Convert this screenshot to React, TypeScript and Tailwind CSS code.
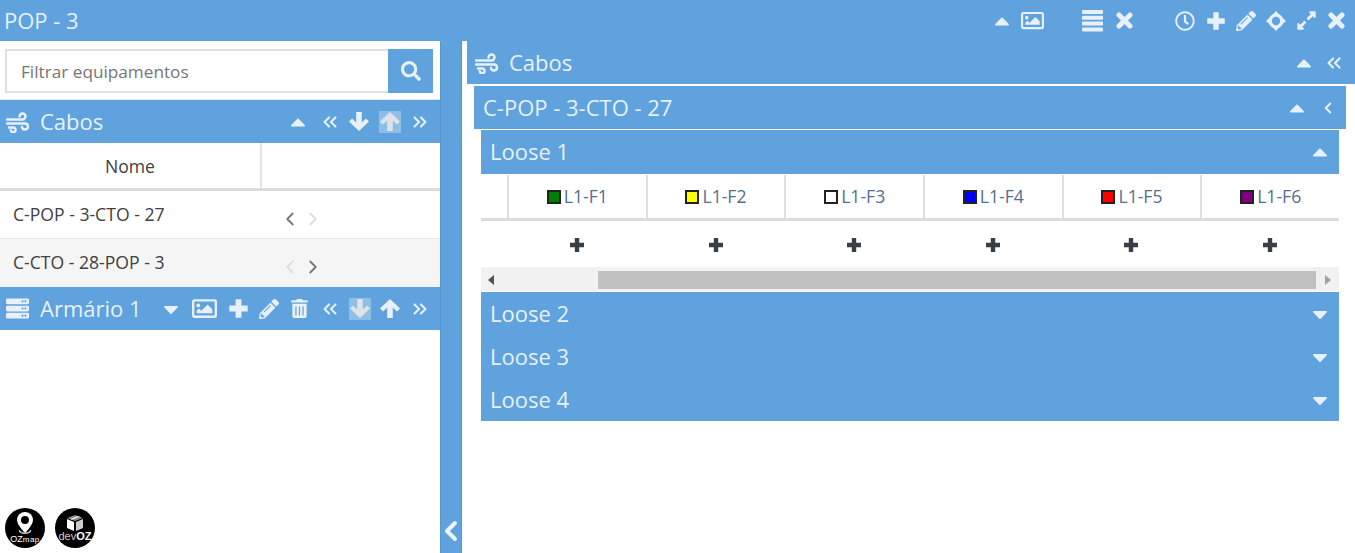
import type { ReactNode } from "react";
import { ChevronLeft, ChevronRight, ChevronsLeft, ChevronsRight } from "lucide-react";
import {
  FaCaretDown,
  FaCaretUp,
  FaExpandAlt,
  FaPencilAlt,
  FaRegClock,
  FaRegImage,
  FaSearch,
  FaServer,
  FaTrashAlt,
} from "react-icons/fa";

function Crosshair() {
  return (
    <svg width="20" height="20" viewBox="0 0 20 20" className="shrink-0">
      <circle cx="10" cy="10" r="5.8" fill="none" stroke="currentColor" strokeWidth="3.2" />
      <path d="M10 0l3.5 4h-7zM10 20l3.5-4h-7zM0 10l4-3.5v7zM20 10l-4-3.5v7z" fill="currentColor" />
    </svg>
  );
}

function Plus({ size, className }: { size: number; className?: string }) {
  return (
    <svg width={size} height={size} viewBox="0 0 16 16" className={className}>
      <path d="M5.8 1h4.4v4.8H15v4.4h-4.8V15H5.8v-4.8H1V5.800h4.800z" fill="currentColor" />
    </svg>
  );
}

function Cross({ className }: { className?: string }) {
  return (
    <svg width="17" height="17" viewBox="0 0 17 17" className={className}>
      <path d="M3 3l11 11M14 3L3 14" stroke="currentColor" strokeWidth="5" strokeLinecap="round" />
    </svg>
  );
}

function Lines({ className }: { className?: string }) {
  return (
    <svg width="21" height="22" viewBox="0 0 21 22" className={className}>
      <rect y="0" width="21" height="4" rx="1" fill="currentColor" />
      <rect y="5.8" width="21" height="4" rx="1" fill="currentColor" />
      <rect y="11.6" width="21" height="4" rx="1" fill="currentColor" />
      <rect y="17.4" width="21" height="4" rx="1" fill="currentColor" />
    </svg>
  );
}

function Wind({ className }: { className?: string }) {
  return (
    <svg width="24" height="22" viewBox="0 0 24 22" fill="none" className={className}>
      <g stroke="currentColor" strokeWidth="2.4" strokeLinecap="round">
        <path d="M1 8.5h15.5a3 3 0 1 0-3-3" />
        <path d="M1 12.5h18a3 3 0 1 1-3 3.5" />
        <path d="M3 16.5h4.2a2.4 2.4 0 1 1-2.4 2.8" />
      </g>
    </svg>
  );
}

function ArrowUp({ className }: { className?: string }) {
  return (
    <svg width="22" height="21" viewBox="0 0 22 21" className={className}>
      <path d="M11 1l10 9.5-3 3-4.200-4V20H8.200V9.500l-4.200 4-3-3z" fill="currentColor" />
    </svg>
  );
}

function Bar({
  title,
  icon,
  right,
  className,
}: {
  title: string;
  icon?: ReactNode;
  right?: ReactNode;
  className: string;
}) {
  return (
    <div className={`flex items-center bg-[#5fa2dd] text-[#e8f1fa] ${className}`}>
      {icon}
      <span className="text-[22px] leading-none whitespace-nowrap pb-[2px]">{title}</span>
      <div className="ml-auto flex items-center">{right}</div>
    </div>
  );
}

function Dimmed({ children }: { children: ReactNode }) {
  return (
    <span className="w-[22px] h-[22px] flex items-center justify-center bg-white/30 text-[#dfe3e6]">{children}</span>
  );
}

const fibers = [
  { name: "L1-F1", color: "bg-[#008000]" },
  { name: "L1-F2", color: "bg-[#ffff00]" },
  { name: "L1-F3", color: "bg-white" },
  { name: "L1-F4", color: "bg-[#0000ff]" },
  { name: "L1-F5", color: "bg-[#ff0000]" },
  { name: "L1-F6", color: "bg-[#800080]" },
];

export default function App() {
  return (
    <div className="w-[1355px] h-[553px] overflow-hidden bg-white flex flex-col font-['Open_Sans',sans-serif]">
      {/* top bar */}
      <div className="h-[41px] shrink-0 bg-[#5fa2dd] text-[#e8f1fa] flex items-center pl-[4px] pr-[10px]">
        <span className="text-[22px] leading-none pb-[2px]">POP - 3</span>
        <div className="ml-auto flex items-center">
          <FaCaretUp size={24} className="mr-[7px]" />
          <FaRegImage size={23} className="mr-[38px]" />
          <Lines className="mr-[13px]" />
          <Cross className="mr-[42px]" />
          <FaRegClock size={20} className="mr-[11px]" />
          <Plus size={20} className="mr-[10px]" />
          <FaPencilAlt size={20} className="mr-[10px]" />
          <Crosshair />
          <FaExpandAlt size={21} className="ml-[10px] mr-[11px]" />
          <Cross />
        </div>
      </div>

      <div className="flex flex-1 min-h-0">
        {/* left column */}
        <div className="w-[440px] shrink-0 flex flex-col relative">
          <div className="h-[59px] shrink-0 pt-[8px] pl-[5px] pr-[7px] border-b border-[#dfe8f1]">
            <div className="flex h-[44px]">
              <div className="flex-1 border-2 border-[#e0e0e0] border-r-0 flex items-center pl-[14px] pt-[2px] text-[17.2px] text-[#757575]">
                Filtrar equipamentos
              </div>
              <div className="w-[45px] bg-[#5fa2dd] flex items-center justify-center text-[#e8f1fa]">
                <FaSearch size={20} />
              </div>
            </div>
          </div>
          <Bar
            title="Cabos"
            className="h-[43px] shrink-0 pl-[6px] pr-[9px]"
            icon={<Wind className="mr-[10px]" />}
            right={
              <>
                <FaCaretUp size={24} className="mr-[9px]" />
                <ChevronsLeft size={22} strokeWidth={2.2} className="mr-[7px]" />
                <ArrowUp className="rotate-180 mr-[9px]" />
                <Dimmed>
                  <ArrowUp />
                </Dimmed>
                <ChevronsRight size={22} strokeWidth={2.2} className="ml-[8px]" />
              </>
            }
          />
          <div className="h-[48px] shrink-0 flex border-b-[3px] border-[#dcdcdc] text-[17.6px] text-[#404040]">
            <div className="w-[262px] border-r-2 border-[#e4e4e4] flex items-center justify-center pt-[2px]">Nome</div>
          </div>
          <div className="h-[48px] shrink-0 flex items-center pl-[13px] text-[17.6px] text-[#404040] border-b border-[#e8e8e8]">
            <span className="w-[266px] pb-[1px]">C-POP - 3-CTO - 27</span>
            <ChevronLeft size={22} strokeWidth={2} className="text-[#777] mt-[8px]" />
            <ChevronRight size={22} strokeWidth={2} className="ml-[1px] text-[#dcdcdc] mt-[8px]" />
          </div>
          <div className="h-[48px] shrink-0 flex items-center pl-[13px] text-[17.6px] text-[#404040] bg-[#f5f5f5]">
            <span className="w-[266px] pb-[1px]">C-CTO - 28-POP - 3</span>
            <ChevronLeft size={22} strokeWidth={2} className="text-[#dcdcdc] mt-[8px]" />
            <ChevronRight size={22} strokeWidth={2} className="ml-[1px] text-[#777] mt-[8px]" />
          </div>
          <Bar
            title="Armário 1"
            className="h-[43px] shrink-0 pl-[6px] pr-[9px]"
            icon={<FaServer size={23} className="mr-[11px]" />}
            right={
              <>
                <FaCaretDown size={24} className="mr-[9px]" />
                <FaRegImage size={25} className="mr-[11px]" />
                <Plus size={21} className="mr-[10px]" />
                <FaPencilAlt size={20} className="mr-[11px]" />
                <FaTrashAlt size={19} className="mr-[10px]" />
                <ChevronsLeft size={22} strokeWidth={2.2} className="mr-[8px]" />
                <Dimmed>
                  <ArrowUp className="rotate-180" />
                </Dimmed>
                <ArrowUp className="ml-[8px]" />
                <ChevronsRight size={22} strokeWidth={2.2} className="ml-[8px]" />
              </>
            }
          />
          <div className="mt-auto flex gap-[10px] pl-[5px] pb-[5px]">
            <div className="w-[40px] h-[40px] rounded-full bg-black flex flex-col items-center text-white">
              <svg width="18" height="25" viewBox="0 0 18 25" className="mt-[3px] -mb-[1px]">
                <path d="M9 1a8 8 0 0 0-8 8c0 5 8 13 8 13s8-8 8-13a8 8 0 0 0-8-8z" fill="white" />
                <circle cx="9" cy="9" r="4" fill="black" />
                <path d="M3 19c-1 2 2 4 6 4s7-2 6-4l-1 0c0 1-2 2.500-5 2.500s-5-1.500-5-2.500z" fill="#bbb" />
              </svg>
              <span className="text-[9px] leading-[9px] font-['Liberation_Sans',sans-serif]">
                OZ<span className="tracking-[0.5px] text-[8px]">map</span>
              </span>
            </div>
            <div className="w-[40px] h-[40px] rounded-full bg-black flex flex-col items-center text-white">
              <svg width="18" height="18" viewBox="0 0 18 18" className="mt-[6px]">
                <path d="M9 1l8 3-8 3-8-3z" fill="#888" />
                <path d="M1 5l7 3v9l-7-3z" fill="white" />
                <path d="M17 5l-7 3v9l7-3z" fill="#ccc" />
                <path d="M4 5l8-3 2 .8-8 3z" fill="#eee" />
              </svg>
              <span className="text-[11px] leading-[11px] -mt-[1px] font-['Liberation_Sans',sans-serif]">
                <span className="font-light text-[#ccc]">dev</span>
                <b>OZ</b>
              </span>
            </div>
          </div>
        </div>

        {/* collapse strip */}
        <div className="w-[22px] shrink-0 bg-[#5fa2dd] border-x border-[#5596cf] flex items-end justify-center pb-[6px] text-[#eef5fb]">
          <ChevronLeft size={32} strokeWidth={3} className="shrink-0" />
        </div>

        {/* right column */}
        <div className="flex-1 min-w-0 pl-[5px] flex flex-col">
          <Bar
            title="Cabos"
            className="h-[43px] shrink-0 pl-[8px] pr-[10px]"
            icon={<Wind className="mr-[10px]" />}
            right={
              <>
                <FaCaretUp size={24} className="mr-[7px]" />
                <ChevronsLeft size={22} strokeWidth={2.2} />
              </>
            }
          />
          <div className="pl-[7px] pr-[9px] pt-[2px]">
            <Bar
              title="C-POP - 3-CTO - 27"
              className="h-[43px] pl-[9px] pr-[9px]"
              right={
                <>
                  <FaCaretUp size={24} className="mr-[10px]" />
                  <ChevronLeft size={18} strokeWidth={2.6} />
                </>
              }
            />
            <div className="pl-[7px] pr-[7px] pt-[1px]">
              <Bar
                title="Loose 1"
                className="h-[44px] pl-[9px] pr-[7px]"
                right={<FaCaretUp size={24} />}
              />
              <div className="grid grid-cols-[26px_repeat(6,1fr)] h-[47px] pt-px border-b-[3px] border-[#dcdcdc]">
                <div />
                {fibers.map((f) => (
                  <div
                    key={f.name}
                    className="border-l-2 border-[#e0e0e0] flex items-center justify-center gap-[3px] text-[17.6px] text-[#52708e]"
                  >
                    <span className={`w-[14px] h-[14px] border-2 border-[#222] ${f.color}`} />
                    {f.name}
                  </div>
                ))}
              </div>
              <div className="grid grid-cols-[27px_repeat(6,1fr)] h-[46px] pt-[2px]">
                <div />
                {fibers.map((f) => (
                  <div key={f.name} className="flex items-center justify-center text-[#3a3f45]">
                    <Plus size={16} />
                  </div>
                ))}
              </div>
              <div className="h-[24px] bg-[#f1f1f1] flex items-center pt-[2px]">
                <span className="w-[117px] pl-[7px]">
                  <span className="block w-0 h-0 border-y-[5px] border-y-transparent border-r-[6px] border-r-[#505050]" />
                </span>
                <div className="w-[718px] h-[18px] bg-[#c1c1c1]" />
                <span className="ml-auto pr-[8px]">
                  <span className="block w-0 h-0 border-y-[5px] border-y-transparent border-l-[6px] border-l-[#a0a0a0]" />
                </span>
              </div>
              <div className="pt-px">
                {["Loose 2", "Loose 3", "Loose 4"].map((name) => (
                  <Bar
                    key={name}
                    title={name}
                    className="h-[43px] pl-[9px] pr-[7px]"
                    right={<FaCaretDown size={24} />}
                  />
                ))}
              </div>
            </div>
          </div>
        </div>
      </div>
    </div>
  );
}
